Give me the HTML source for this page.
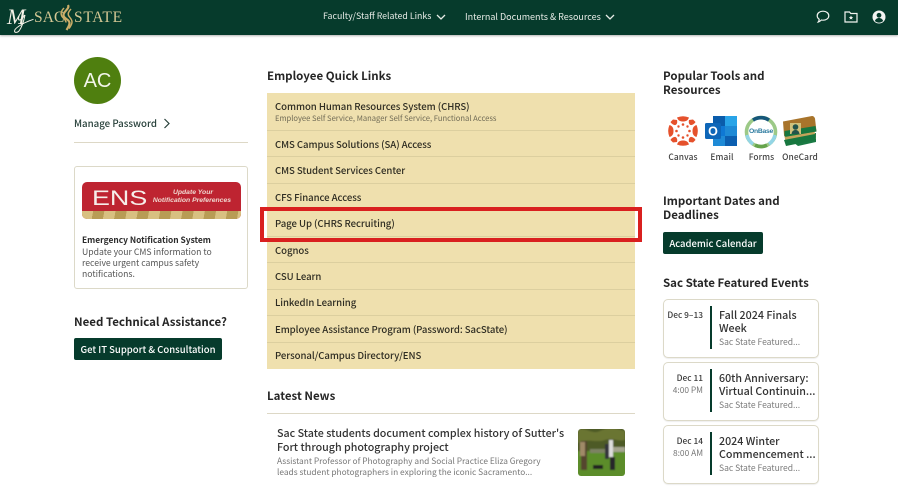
<!DOCTYPE html>
<html lang="en"><head><meta charset="utf-8"><title>My Sac State</title>
<style>
html,body{margin:0;padding:0;background:#fff}
body{width:898px;height:488px;overflow:hidden;position:relative;font-family:"Noto Sans CJK SC","Liberation Sans",sans-serif;color:#2b2b2b}
.t{position:absolute;white-space:nowrap;line-height:1}
.b{position:absolute}
.h{font-weight:700;font-size:11.5px;letter-spacing:0;color:#262626}
.row{position:absolute;left:0;width:368px;border-bottom:1px solid #dccf9f}
.q{left:275px;font-size:9.6px;font-weight:500;color:#2e2c22;letter-spacing:-.06px}
.card{position:absolute;left:663px;width:154px;height:57px;border:1px solid #dcd9c8;border-radius:5px;box-shadow:0 1px 1px #eee;background:#fff}
.bar{position:absolute;left:710px;width:2px;height:43px;background:#063b2c}
.d{font-size:8.4px;color:#3a3a3a;font-weight:500;text-align:right;width:40px;left:663px}
.d2{font-size:8.4px;color:#777;text-align:right;width:40px;left:663px}
.et{left:719px;font-size:10.7px;color:#333;font-weight:500;letter-spacing:0}
.es{left:719px;font-size:8.55px;color:#7a7a7a;letter-spacing:0}
.lab{font-size:8.4px;color:#444;text-align:center;font-weight:500;letter-spacing:.1px}
.btn{position:absolute;background:#063b2c;border-radius:2px;color:#fff;font-size:9.5px;font-weight:500;line-height:22px;text-align:center;letter-spacing:0;white-space:nowrap}
</style></head><body>

<!-- header -->
<div class="b" style="left:0;top:0;width:898px;height:35px;background:#063b2c;box-shadow:0 1px 2px rgba(0,0,0,.3)"></div>
<div class="t" style="left:7px;top:6px;font-family:'Liberation Serif',serif;font-style:italic;font-size:22px;color:#f4f1e6;letter-spacing:-1.5px;">M</div>
<svg class="b" style="left:0;top:0" width="40" height="35" viewBox="0 0 40 35"><path d="M25 15c-1 5-3 12-6 16-1.500 1.800-4 1.800-4.500.3-.5-2.500 7-8 19-12" fill="none" stroke="#f4f1e6" stroke-width="1"/><path d="M19 16c-.5 2-1 4 .5 4 2 0 4-3 5-5" fill="none" stroke="#f4f1e6" stroke-width="1"/></svg>
<div class="t" style="left:34px;top:10px;font-family:'Liberation Serif',serif;font-size:15.5px;color:#d4c794;letter-spacing:.1px">SAC</div>
<svg class="b" style="left:59px;top:4px" width="16" height="27" viewBox="0 0 16 27"><path d="M9 1c2 4-4.500 6-4.500 10 0 4 6 4 6 8 0 2.500-1.500 4.500-3 7" fill="none" stroke="#c9ad68" stroke-width="2.200"/><path d="M5 4C2 7 1.500 10 3 12.500c1.500 2.200 4 3 4 6" fill="none" stroke="#c9ad68" stroke-width="1.500"/><path d="M12 5c-2 2-3.500 4-2.500 6.500 1 2 3.500 3.500 3.500 6.500 0 2.500-1.500 4.500-3 6.500" fill="none" stroke="#c9ad68" stroke-width="1.500"/></svg>
<div class="t" style="left:74px;top:10px;font-family:'Liberation Serif',serif;font-size:15.5px;color:#d4c794;letter-spacing:.7px">STATE</div>

<div class="t" style="left:323px;top:12px;font-size:8.8px;color:#e6ebe6;letter-spacing:0">Faculty/Staff Related Links</div>
<svg class="b" style="left:436px;top:14px" width="10" height="7" viewBox="0 0 10 7"><path d="M1 1l4 4 4-4" fill="none" stroke="#e6ebe6" stroke-width="1.3"/></svg>
<div class="t" style="left:465px;top:12px;font-size:9px;color:#e6ebe6;letter-spacing:0">Internal Documents &amp; Resources</div>
<svg class="b" style="left:605px;top:14px" width="10" height="7" viewBox="0 0 10 7"><path d="M1 1l4 4 4-4" fill="none" stroke="#e6ebe6" stroke-width="1.3"/></svg>

<svg class="b" style="left:816px;top:10px" width="14" height="14" viewBox="0 0 14 14"><path d="M7 1.200c3.300 0 5.800 1.900 5.800 4.500S10.300 10.200 7 10.200c-.6 0-1.100 0-1.600-.2-.9.900-2 1.800-3.200 2 .6-.8 1-1.800 1-2.800C1.900 8.300 1.200 7.100 1.200 5.700c0-2.600 2.500-4.500 5.800-4.500z" fill="none" stroke="#f1f3ef" stroke-width="1.200"/></svg>
<svg class="b" style="left:844px;top:11px" width="14" height="12" viewBox="0 0 14 12"><path d="M1 1h4.500l1.300 1.500H13v8.500H1z" fill="none" stroke="#f1f3ef" stroke-width="1.200"/><path d="M7 4.500l.7 1.500 1.500.1-1.200 1 .4 1.500L7 7.800l-1.400.8.400-1.500-1.200-1 1.500-.1z" fill="#f1f3ef"/></svg>
<svg class="b" style="left:872px;top:10px" width="14" height="14" viewBox="0 0 14 14"><circle cx="7" cy="7" r="6.500" fill="#f4f5f2"/><circle cx="7" cy="5.300" r="2.400" fill="#063b2c"/><path d="M2.900 11c.6-2 2.200-3 4.100-3s3.500 1 4.100 3c-1 1-2.500 1.600-4.100 1.600S3.900 12 2.900 11z" fill="#063b2c"/></svg>

<!-- left column -->
<div class="b" style="left:74px;top:57px;width:47px;height:47px;border-radius:50%;background:#4f7f0f"></div>
<div class="t" style="left:74px;top:71px;width:47px;text-align:center;font-family:'Liberation Sans',sans-serif;font-size:20px;color:#f2f5ea">AC</div>
<div class="t" style="left:74px;top:119px;font-size:9.7px;font-weight:500;color:#27403a;letter-spacing:0">Manage Password</div>
<svg class="b" style="left:163px;top:118px" width="8" height="11" viewBox="0 0 8 11"><path d="M1.500 1l4.500 4.500L1.500 10" fill="none" stroke="#27403a" stroke-width="1.200"/></svg>
<div class="b" style="left:74px;top:142px;width:174px;height:1px;background:#ddd8c6"></div>

<div class="b" style="left:74px;top:166px;width:172px;height:121px;border:1px solid #dcd9c8;border-radius:3px"></div>
<div class="b" style="left:82px;top:182px;width:159px;height:37px;border-radius:5px;overflow:hidden;background:#be2431">
 <div class="b" style="left:0;top:29px;width:159px;height:8px;background:repeating-linear-gradient(100deg,#d8c081 0 11px,#b89c55 11px 22px)"></div>
</div>
<div class="t" style="left:92px;top:188px;font-family:'Liberation Sans',sans-serif;font-size:21px;color:#f6eeea;transform:scaleX(1.28);transform-origin:left">ENS</div>
<div class="t" style="left:151px;top:190px;width:62px;text-align:right;font-family:'Liberation Sans',sans-serif;font-style:italic;font-weight:700;font-size:6.8px;color:#f0d8d0">Update Your</div>
<div class="t" style="left:141px;top:198px;width:90px;text-align:right;font-family:'Liberation Sans',sans-serif;font-style:italic;font-weight:700;font-size:6.8px;color:#f0d8d0">Notification Preferences</div>
<div class="t" style="left:82px;top:236px;font-size:8.4px;font-weight:700;color:#2b2b2b;letter-spacing:0">Emergency Notification System</div>
<div class="t" style="left:82px;top:248px;font-size:8.67px;color:#555;letter-spacing:0">Update your CMS information to</div>
<div class="t" style="left:82px;top:259px;font-size:8.67px;color:#555;letter-spacing:0">receive urgent campus safety</div>
<div class="t" style="left:82px;top:270px;font-size:8.67px;color:#555;letter-spacing:0">notifications.</div>

<div class="t h" style="left:74px;top:317px">Need Technical Assistance?</div>
<div class="btn" style="left:74px;top:338px;width:148px;height:22px">Get IT Support &amp; Consultation</div>

<!-- center column -->
<div class="t h" style="left:267px;top:71px">Employee Quick Links</div>
<div class="b" style="left:267px;top:93px;width:368px;height:276px;background:#efe0ae">
 <div class="row" style="top:37px"></div>
 <div class="row" style="top:63px"></div>
 <div class="row" style="top:90px"></div>
 <div class="row" style="top:116px"></div>
 <div class="row" style="top:143px"></div>
 <div class="row" style="top:169px"></div>
 <div class="row" style="top:196px"></div>
 <div class="row" style="top:222px"></div>
 <div class="row" style="top:249px"></div>
</div>
<div class="t q" style="top:102px">Common Human Resources System (CHRS)</div>
<div class="t" style="left:275px;top:115px;font-size:7.6px;color:#6f6a55;letter-spacing:0">Employee Self Service, Manager Self Service, Functional Access</div>
<div class="t q" style="top:140px">CMS Campus Solutions (SA) Access</div>
<div class="t q" style="top:166px">CMS Student Services Center</div>
<div class="t q" style="top:193px">CFS Finance Access</div>
<div class="t q" style="top:219px">Page Up (CHRS Recruiting)</div>
<div class="t q" style="top:246px">Cognos</div>
<div class="t q" style="top:272px">CSU Learn</div>
<div class="t q" style="top:298px">LinkedIn Learning</div>
<div class="t q" style="top:325px">Employee Assistance Program (Password: SacState)</div>
<div class="t q" style="top:351px">Personal/Campus Directory/ENS</div>
<div class="b" style="left:260px;top:207px;width:374px;height:27px;border:4px solid #d9201f"></div>

<div class="t h" style="left:267px;top:391px">Latest News</div>
<div class="b" style="left:267px;top:413px;width:368px;height:1px;background:#ddd8c6"></div>
<div class="t" style="left:277px;top:429px;font-size:10.7px;font-weight:500;color:#333;letter-spacing:0">Sac State students document complex history of Sutter's</div>
<div class="t" style="left:277px;top:443px;font-size:10.7px;font-weight:500;color:#333;letter-spacing:0">Fort through photography project</div>
<div class="t" style="left:277px;top:457px;font-size:8.35px;color:#777;letter-spacing:0">Assistant Professor of Photography and Social Practice Eliza Gregory</div>
<div class="t" style="left:277px;top:468px;font-size:8.35px;color:#777;letter-spacing:0">leads student photographers in exploring the iconic Sacramento...</div>
<svg class="b" style="left:578px;top:429px;border-radius:3px" width="47" height="47" viewBox="0 0 47 47">
 <defs><filter id="bl" x="-10%" y="-10%" width="120%" height="120%"><feGaussianBlur stdDeviation=".8"/></filter></defs>
 <g filter="url(#bl)">
 <rect x="-3" y="-3" width="53" height="53" fill="#5c8a2a"/>
 <rect x="-3" y="-3" width="53" height="25" fill="#4e5a28"/>
 <path d="M0 1c8-3 14 5 22 1s14-3 25 0v9c-8 2-12-3-20 0S8 9 0 14z" fill="#6b7433"/>
 <rect x="12" y="20" width="15" height="4" fill="#7d8263"/>
 <rect x="35" y="18" width="12" height="5" fill="#a5a58f"/>
 <rect x="-3" y="24" width="53" height="26" fill="#5c8d2a"/>
 <rect x="3" y="12" width="6" height="29" fill="#54452e"/>
 <rect x="2" y="13" width="5" height="14" fill="#a08a68"/>
 <rect x="27" y="15" width="4" height="15" fill="#33333a"/>
 <rect x="31" y="11" width="4" height="17" fill="#ddd"/>
 <rect x="32" y="28" width="5" height="13" fill="#28282c"/>
 <rect x="15" y="36" width="10" height="4" fill="#232320"/>
 </g>
</svg>

<!-- right column -->
<div class="t h" style="left:663px;top:71px">Popular Tools and</div>
<div class="t h" style="left:663px;top:85px">Resources</div>

<svg class="b" style="left:665.500px;top:114px" width="34" height="34" viewBox="0 0 34 34">
 <g fill="#e5512c">
 <path d="M11 3.500a15 15 0 0 1 12 0c-1 3-3 4-6 4s-5-1-6-4z"/>
 <path d="M11 30.500a15 15 0 0 0 12 0c-1-3-3-4-6-4s-5 1-6 4z"/>
 <path d="M3.500 11a15 15 0 0 0 0 12c3-1 4-3 4-6s-1-5-4-6z"/>
 <path d="M30.500 11a15 15 0 0 1 0 12c-3-1-4-3-4-6s1-5 4-6z"/>
 <path d="M7 5.500l4 .5c.5 2 .3 4-1.500 5C8 11.500 5 9.500 4.500 8z"/>
 <path d="M27 5.500l-4 .5c-.5 2-.3 4 1.500 5 1.500.5 4.500-1.500 5-3z"/>
 <path d="M7 28.500l4-.5c.5-2 .3-4-1.500-5C8 22.500 5 24.500 4.500 26z"/>
 <path d="M27 28.500l-4-.5c-.5-2-.3-4 1.500-5 1.500-.5 4.500 1.500 5 3z"/>
 <circle cx="17" cy="10.500" r="1.300"/><circle cx="17" cy="23.500" r="1.300"/><circle cx="10.500" cy="17" r="1.300"/><circle cx="23.500" cy="17" r="1.300"/>
 <circle cx="12.500" cy="12.500" r="1.200"/><circle cx="21.500" cy="12.500" r="1.200"/><circle cx="12.500" cy="21.500" r="1.200"/><circle cx="21.500" cy="21.500" r="1.200"/></g>
</svg>
<svg class="b" style="left:705px;top:116px" width="33" height="31" viewBox="0 0 33 31">
 <rect x="8" y="0" width="24" height="30" rx="1.500" fill="#0f78d4"/>
 <rect x="8" y="0" width="12" height="10" fill="#0a5cab"/>
 <rect x="20" y="0" width="12" height="10" fill="#29a4e8"/>
 <rect x="20" y="10" width="12" height="10" fill="#1e8ad6"/>
 <rect x="8" y="20" width="12" height="10" fill="#1e8ad6"/>
 <rect x="20" y="20" width="12" height="10" fill="#0c5fb0"/>
 <rect x="0" y="7" width="16" height="16" rx="1.500" fill="#0e66b8"/>
 <text x="8" y="19.500" font-family="Liberation Sans,sans-serif" font-weight="700" font-size="12.500" fill="#fff" text-anchor="middle">O</text>
</svg>
<svg class="b" style="left:743.500px;top:114.500px" width="34" height="34" viewBox="0 0 34 34">
 <circle cx="17" cy="17" r="14.500" fill="#fff" stroke="#9cc987" stroke-width="3.600"/>
 <path d="M9 5.100A14.500 14.500 0 0 1 25 5.100" fill="none" stroke="#16577a" stroke-width="3.600"/>
 <path d="M31 20a14.500 14.500 0 0 1-6 9M3 20a14.500 14.500 0 0 0 6 9" fill="none" stroke="#93d5e6" stroke-width="3.600"/>
 <path d="M11 30.200a14.500 14.500 0 0 0 12 0" fill="none" stroke="#66a44c" stroke-width="3.600"/>
 <text x="17" y="18" font-family="Liberation Sans,sans-serif" font-weight="700" font-size="6.800" fill="#2e7ca0" text-anchor="middle" letter-spacing="-.3">OnBase</text>
</svg>
<svg class="b" style="left:783px;top:114px" width="34" height="34" viewBox="0 0 34 34">
 <path d="M1 21l14 11 18-4V19z" fill="#1a7a44"/>
 <path d="M1 20l30-5 2 10-30 5z" fill="#c3a45a"/>
 <path d="M1 26l31-6 1 6-30 6z" fill="#17773f"/>
 <path d="M0 7.500L29 2c1.500 0 2.500 1 3 2.500l1.500 13L3 22.500c-1 .2-2-.5-2-1.500z" fill="#a8742b"/>
 <path d="M1.500 17l31-5 1 5.500-30.500 5.200c-1 .2-1.500-.5-1.500-1.500z" fill="#17773f"/>
 <rect x="7" y="9" width="11" height="11" fill="#cfc27c"/><circle cx="12.500" cy="13" r="2.800" fill="#22534a"/><path d="M8.500 20c.5-3 2-4 4-4s3.500 1 4 4z" fill="#22534a"/>
</svg>
<div class="t lab" style="left:663px;top:153px;width:40px">Canvas</div>
<div class="t lab" style="left:702px;top:153px;width:40px">Email</div>
<div class="t lab" style="left:741px;top:153px;width:41px">Forms</div>
<div class="t lab" style="left:780px;top:153px;width:40px">OneCard</div>

<div class="t h" style="left:663px;top:196px">Important Dates and</div>
<div class="t h" style="left:663px;top:210px">Deadlines</div>
<div class="btn" style="left:663px;top:232px;width:100px;height:22px">Academic Calendar</div>

<div class="t h" style="left:663px;top:278px">Sac State Featured Events</div>

<div class="card" style="top:299px"></div>
<div class="bar" style="top:306px"></div>
<div class="t d" style="top:311px">Dec 9–13</div>
<div class="t et" style="top:311px">Fall 2024 Finals</div>
<div class="t et" style="top:324px">Week</div>
<div class="t es" style="top:338px">Sac State Featured...</div>

<div class="card" style="top:362px"></div>
<div class="bar" style="top:369px"></div>
<div class="t d" style="top:374px">Dec 11</div>
<div class="t d2" style="top:386px">4:00 PM</div>
<div class="t et" style="top:374px">60th Anniversary:</div>
<div class="t et" style="top:387px">Virtual Continuin...</div>
<div class="t es" style="top:401px">Sac State Featured...</div>

<div class="card" style="top:425px"></div>
<div class="bar" style="top:432px"></div>
<div class="t d" style="top:437px">Dec 14</div>
<div class="t d2" style="top:449px">8:00 AM</div>
<div class="t et" style="top:437px">2024 Winter</div>
<div class="t et" style="top:450px">Commencement ...</div>
<div class="t es" style="top:464px">Sac State Featured...</div>

</body></html>
